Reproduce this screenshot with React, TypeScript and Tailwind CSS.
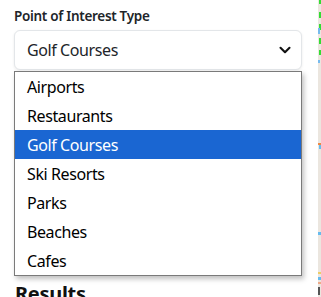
import React from "react";

const items = ["Airports", "Restaurants", "Golf Courses", "Ski Resorts", "Parks", "Beaches", "Cafes"];

function MapStrip() {
  return (
    <svg width="3" height="297" viewBox="0 0 3 297" className="block">
      <rect width="3" height="297" fill="#ebe6df" />
      <rect x="1" y="0" width="2" height="4" fill="#33dd33" />
      <rect x="1" y="12" width="2" height="6" fill="#33dd33" />
      <rect x="1" y="24" width="2" height="6" fill="#33dd33" />
      <rect x="0" y="28" width="2" height="6" fill="#77bbee" />
      <rect x="1" y="38" width="2" height="6" fill="#33dd33" />
      <rect x="1" y="50" width="2" height="5" fill="#33dd33" />
      <rect x="0" y="60" width="2" height="3" fill="#77bbee" />
      <rect x="0" y="143" width="3" height="2" fill="#ee8844" />
      <rect x="1" y="145" width="2" height="4" fill="#66bbee" />
      <rect x="0" y="232" width="3" height="3" fill="#66bbee" />
      <rect x="0" y="272" width="3" height="2" fill="#eecc66" />
      <rect x="0" y="277" width="3" height="3" fill="#66bbee" />
      <rect x="0" y="282" width="3" height="2" fill="#eeaa88" />
      <rect x="0" y="287" width="2" height="8" fill="#555555" />
    </svg>
  );
}

export default function App() {
  return (
    <div className="flex h-[297px] w-[321px] overflow-hidden bg-white" style={{ fontFamily: '"Noto Sans", "Open Sans", sans-serif' }}>
      <div className="w-[318px] shrink-0 pl-[14px] pr-[16px] pt-[7px]">
        <div className="text-[13.5px] font-semibold leading-[19px] tracking-[-0.3px] text-[#212529]">Point of Interest Type</div>
        <div className="mt-[4px] flex h-[40px] items-center justify-between rounded-[6px] border border-[#e3e6e9] bg-white pl-[12px] pr-[9px] shadow-[0_1px_3px_rgba(0,0,0,0.08)]">
          <span className="text-[16px] tracking-[-0.4px] text-[#212529]">Golf Courses</span>
          <svg width="12" height="12" viewBox="0 0 16 16" className="mr-[1px]">
            <path d="M2 5l6 6 6-6" fill="none" stroke="#111" strokeWidth="2.8" strokeLinecap="round" strokeLinejoin="round" />
          </svg>
        </div>
        <div className="mt-[1px] flex w-[288px] flex-col border border-[#7a7a7a] bg-white shadow-[2px_3px_5px_rgba(0,0,0,0.25)]">
          {items.map((it) => (
            <div
              key={it}
              className={
                it === "Golf Courses"
                  ? "flex h-[29px] items-center bg-[#1a66d2] pl-[12px] text-[16px] tracking-[-0.4px] text-white"
                  : "flex h-[29px] items-center pl-[12px] text-[16px] tracking-[-0.4px] text-black"
              }
            >
              {it}
            </div>
          ))}
        </div>
        <div className="mt-[6px] pl-[1px] text-[20px] font-bold leading-[24px] tracking-[-0.3px] text-[#111]">Results</div>
      </div>
      <div className="flex-1 bg-[#ebe6df]">
        <MapStrip />
      </div>
    </div>
  );
}
